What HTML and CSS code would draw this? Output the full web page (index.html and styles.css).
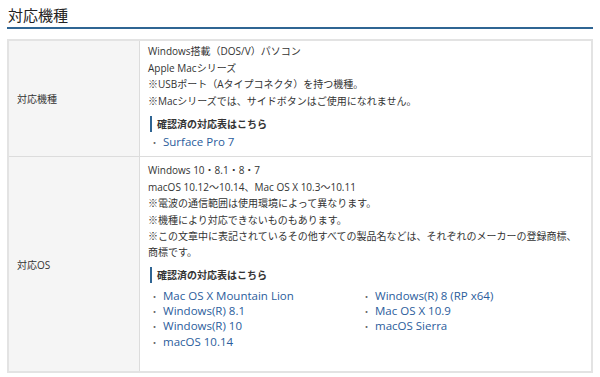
FILE: index.html
```html
<!DOCTYPE html>
<html lang="ja">
<head>
<meta charset="utf-8">
<link rel="stylesheet" href="styles.css">
</head>
<body>
<section class="spec">
  <h2 class="spec-title">対応機種</h2>
  <table class="spec-table">
    <tr class="row-1">
      <th>対応機種</th>
      <td>
        <p>Windows搭載（DOS/V）パソコン<br>Apple Macシリーズ<br>※USBポート（Aタイプコネクタ）を持つ機種。<br>※Macシリーズでは、サイドボタンはご使用になれません。</p>
        <h3 class="sub">確認済の対応表はこちら</h3>
        <ul class="links">
          <li><a href="#">Surface Pro 7</a></li>
        </ul>
      </td>
    </tr>
    <tr class="row-2">
      <th>対応OS</th>
      <td>
        <p>Windows 10・8.1・8・7<br>macOS 10.12～10.14、Mac OS X 10.3～10.11<br>※電波の通信範囲は使用環境によって異なります。<br>※機種により対応できないものもあります。<br>※この文章中に表記されているその他すべての製品名などは、それぞれのメーカーの登録商標、商標です。</p>
        <h3 class="sub">確認済の対応表はこちら</h3>
        <ul class="links two-col">
          <li><a href="#">Mac OS X Mountain Lion</a></li>
          <li><a href="#">Windows(R) 8 (RP x64)</a></li>
          <li><a href="#">Windows(R) 8.1</a></li>
          <li><a href="#">Mac OS X 10.9</a></li>
          <li><a href="#">Windows(R) 10</a></li>
          <li><a href="#">macOS Sierra</a></li>
          <li><a href="#">macOS 10.14</a></li>
        </ul>
      </td>
    </tr>
  </table>
</section>
</body>
</html>
```

FILE: styles.css
```css
html, body {
  margin: 0;
  padding: 0;
  background: #fff;
}
body {
  font-family: "Open Sans", "Noto Sans CJK JP", sans-serif;
  color: #333;
  font-size: 10px;
}
.spec {
  padding: 5px 7px 0 7px;
}
.spec-title {
  margin: 0;
  font-size: 15px;
  font-weight: 400;
  line-height: 20px;
  padding: 0 0 2px 1px;
  border-bottom: 2px solid #2f6593;
  color: #222;
}
.spec-table {
  margin-top: 10px;
  width: 586px;
  border-collapse: collapse;
  border: 2px solid #e3e3e3;
}
.spec-table th,
.spec-table td {
  border: 1px solid #dcdcdc;
  vertical-align: middle;
  text-align: left;
}
.spec-table th {
  width: 114px;
  background: #f5f5f5;
  font-weight: 400;
  padding: 0 8px;
  font-size: 10px;
  color: #333;
}
.spec-table td {
  padding: 2px 8px 5px 8px;
}
.spec-table p {
  margin: 0;
  line-height: 16.6px;
}
.row-2 td {
  padding-top: 5px;
}
.row-2 td p {
  line-height: 16.4px;
}
.sub {
  margin: 7px 0 0 2px;
  font-size: 10px;
  font-weight: 700;
  line-height: 16px;
  padding-left: 5px;
  border-left: 2px solid #2f6593;
  color: #333;
}
.row-2 .sub {
  margin-top: 6px;
}
.links {
  list-style: none;
  margin: 1px 0 0 0;
  padding: 0;
}
.links li {
  font-size: 11.5px;
  line-height: 18px;
  height: 18px;
  padding-left: 2px;
}
.two-col {
  display: grid;
  grid-template-columns: 212px 212px;
  margin: 5px 0 17px 0;
}
.two-col li {
  line-height: 15.3px;
  height: 15.3px;
}
.links li::before {
  content: "・";
  font-family: "Noto Sans CJK JP", sans-serif;
  color: #666;
  font-size: 9px;
  line-height: 1;
  margin-right: 4px;
}
.links a {
  color: #2b5d9c;
  text-decoration: none;
}
```
